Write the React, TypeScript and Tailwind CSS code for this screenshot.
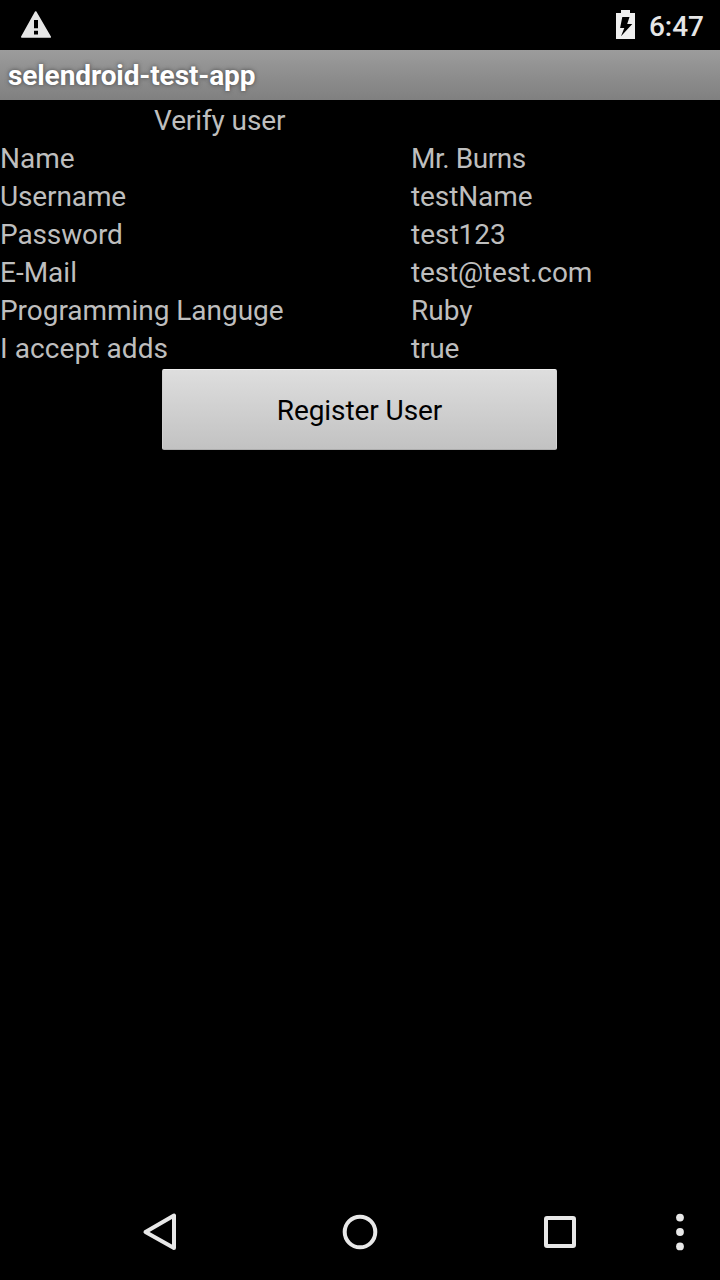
const rows = [
  { label: "Name", value: "Mr. Burns", labelClass: "", valueClass: "tracking-[-0.45px]" },
  { label: "Username", value: "testName", labelClass: "tracking-[-0.12px]", valueClass: "tracking-[-0.1px]" },
  { label: "Password", value: "test123", labelClass: "tracking-[-0.12px]", valueClass: "" },
  { label: "E-Mail", value: "test@test.com", labelClass: "", valueClass: "tracking-[-0.14px]" },
  { label: "Programming Languge", value: "Ruby", labelClass: "tracking-[-0.04px]", valueClass: "" },
  { label: "I accept adds", value: "true", labelClass: "tracking-[0.08px]", valueClass: "tracking-[-0.2px]" },
];

function StatusBar() {
  return (
    <div className="flex h-[50px] shrink-0 items-start justify-between text-[#e6e6e6]">
      <svg className="mt-[11px] ml-[21px]" width="30" height="27" viewBox="0 0 30 27">
        <path d="M14.7 1 29.2 26H.8Z" fill="currentColor" stroke="currentColor" strokeWidth="1.6" strokeLinejoin="round" />
        <path d="M13 9h4v8.3h-4zM13 19.8h4v3.7h-4z" fill="#000" />
      </svg>
      <div className="flex items-start">
        <svg className="mt-[10px]" width="19" height="29" viewBox="0 0 19 29">
          <path d="M5 0h9v3h5v26H0V3h5Z" fill="#efefef" />
          <path d="M6.3 7h7.2l-2.3 6.9h5.1L5 26.3l3.3-8.2H4.1Z" fill="#000" />
        </svg>
        <span className="mt-[7px] mr-[16px] ml-[14px] text-[28px] leading-[40px] font-medium">6:47</span>
      </div>
    </div>
  );
}

function NavigationBar() {
  return (
    <nav className="flex h-24 shrink-0 items-center text-[#e8e8e8]">
      <svg className="ml-[142px]" width="36" height="40" viewBox="0 0 36 40" fill="none" stroke="currentColor" strokeWidth="4" strokeLinejoin="round">
        <path d="M32 3.5v32.5L3.5 20Z" />
      </svg>
      <svg className="ml-[162px]" width="40" height="40" viewBox="0 0 40 40" fill="none" stroke="currentColor" strokeWidth="4">
        <circle cx="20" cy="20" r="15.3" />
      </svg>
      <svg className="ml-[160px]" width="40" height="40" viewBox="0 0 40 40" fill="none" stroke="currentColor" strokeWidth="4">
        <rect x="6" y="6" width="28" height="28" rx="1" />
      </svg>
      <svg className="ml-[90px]" width="20" height="40" viewBox="0 0 20 40" fill="currentColor">
        <circle cx="10" cy="5.6" r="3.9" />
        <circle cx="10" cy="20" r="3.9" />
        <circle cx="10" cy="34.4" r="3.9" />
      </svg>
    </nav>
  );
}

export default function App() {
  return (
    <div className="flex h-[1280px] w-[720px] flex-col overflow-hidden bg-black font-['Roboto',sans-serif]">
      <StatusBar />
      <header className="flex h-[50px] shrink-0 items-center bg-linear-to-b from-[#9c9c9c] to-[#808080] pt-[2px] pl-2">
        <h1 className="text-[28px] leading-[48px] font-bold tracking-[-0.1px] text-white [text-shadow:0_0_4px_#444]">selendroid-test-app</h1>
      </header>
      <main className="flex flex-1 flex-col pt-[2px] text-[28px] leading-[38px] text-[#bebebe]">
        <h2 className="pl-[154px] tracking-[-0.1px]">Verify user</h2>
        <dl className="grid grid-cols-[411px_1fr]">
          {rows.map((row) => (
            <div key={row.label} className="contents">
              <dt className={row.labelClass}>{row.label}</dt>
              <dd className={row.valueClass}>{row.value}</dd>
            </div>
          ))}
        </dl>
        <button className="mt-px ml-[162px] h-[81px] w-[395px] rounded-[2px] border border-t-[#eeeeee] border-r-[#d4d4d4] border-b-[#adadad] border-l-[#d0d0d0] bg-linear-to-b from-[#dedede] to-[#c2c2c2] pt-[2px] tracking-[-0.08px] text-black">
          Register User
        </button>
      </main>
      <NavigationBar />
    </div>
  );
}
